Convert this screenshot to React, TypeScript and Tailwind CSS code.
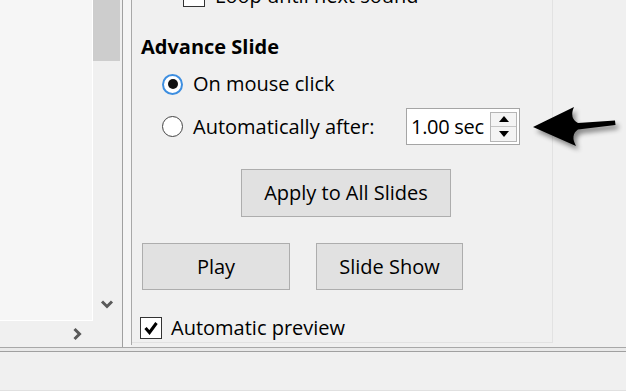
import React from "react";

function Chevron({ dir }: { dir: "down" | "right" }) {
    return (
        <svg width="14" height="14" viewBox="0 0 14 14" className="block">
            {dir === "down" ? (
                <polyline points="2,4.5 7,9.5 12,4.5" fill="none" stroke="#5a5a5a" strokeWidth="3" />
            ) : (
                <polyline points="4.5,2 9.5,7 4.5,12" fill="none" stroke="#5a5a5a" strokeWidth="3" />
            )}
        </svg>
    );
}

function Check({ checked }: { checked?: boolean }) {
    return (
        <div className="w-[22px] h-[22px] border-[1.5px] border-[#333] bg-white flex items-center justify-center shrink-0">
            {checked && (
                <svg width="16" height="16" viewBox="0 0 16 16">
                    <polyline points="2.5,8 6.5,12.5 13.5,3" fill="none" stroke="#000" strokeWidth="3" />
                </svg>
            )}
        </div>
    );
}

function Radio({ selected }: { selected?: boolean }) {
    return selected ? (
        <div className="w-[21px] h-[21px] rounded-full border-2 border-[#3d8ee0] bg-white flex items-center justify-center shrink-0">
            <div className="w-[10px] h-[10px] rounded-full bg-[#111]" />
        </div>
    ) : (
        <div className="w-[21px] h-[21px] rounded-full border-[1.5px] border-[#444] bg-white shrink-0" />
    );
}

// hand-drawn style pointer arrow with soft shadow
function Arrow() {
    return (
        <svg width="96" height="48" viewBox="0 0 96 48" className="block shrink-0 overflow-visible">
            <defs>
                <filter id="sh" x="-20%" y="-40%" width="150%" height="190%">
                    <feGaussianBlur in="SourceAlpha" stdDeviation="2.5" />
                    <feOffset dx="3" dy="4" result="b" />
                    <feComponentTransfer>
                        <feFuncA type="linear" slope="0.45" />
                    </feComponentTransfer>
                    <feMerge>
                        <feMergeNode />
                        <feMergeNode in="SourceGraphic" />
                    </feMerge>
                </filter>
            </defs>
            <path
                d="M5 23 L46 3 Q41 14 50 19 L87 16.5 L87.5 21 L50 25.5 Q42 31 48 42 Z"
                fill="#000"
                filter="url(#sh)"
            />
        </svg>
    );
}

function WinButton({ label, className }: { label: string; className: string }) {
    return (
        <div className={`bg-[#e1e1e1] border border-[#adadad] flex items-center justify-center text-black whitespace-nowrap shrink-0 ${className}`}>
            {label}
        </div>
    );
}

export default function App() {
    return (
        <div
            className="w-[626px] h-[391px] bg-[#f0f0f0] overflow-hidden flex flex-col text-[20px] text-black"
            style={{ fontFamily: '"Open Sans", "Noto Sans", sans-serif' }}
        >
            <div className="flex h-[347px] shrink-0">
                {/* left pane */}
                <div className="w-[122px] flex flex-col shrink-0">
                    <div className="flex h-[321px]">
                        <div className="w-[93px] bg-[#f6f6f6] border-r border-b border-white" />
                        <div className="w-[29px] flex flex-col bg-[#f0f0f0]">
                            <div className="w-[27px] h-[61px] bg-[#cdcdcd]" />
                            <div className="flex-1" />
                            <div className="w-[27px] flex justify-center pb-[10px]">
                                <Chevron dir="down" />
                            </div>
                        </div>
                    </div>
                    <div className="flex h-[26px]">
                        <div className="w-[93px] flex items-center justify-end pr-[9px]">
                            <Chevron dir="right" />
                        </div>
                    </div>
                </div>
                <div className="w-px bg-[#a0a0a0] shrink-0" />
                <div className="w-[8px] bg-[#f5f5f5] shrink-0" />
                <div className="w-px bg-[#a8a8a8] h-[345px] shrink-0" />

                {/* content */}
                <div className="w-[421px] h-[343px] shrink-0 border-r border-b border-[#e2e2e2] flex flex-col whitespace-nowrap">
                    <div className="flex items-center h-[22px] -mt-[15px] pl-[51px] gap-[10px] leading-none">
                        <Check />
                        <span>Loop until next sound</span>
                    </div>
                    <div className="mt-[26px] h-[28px] pl-[9px] font-bold leading-[28px]">Advance Slide</div>
                    <div className="mt-[8px] h-[30px] pl-[30px] flex items-center gap-[10px]">
                        <Radio selected />
                        <span>On mouse click</span>
                    </div>
                    <div className="mt-[9px] h-[37px] pl-[30px] flex items-center">
                        <Radio />
                        <span className="ml-[10px] w-[213px] shrink-0">Automatically after:</span>
                        <div className="w-[114px] h-[37px] shrink-0 bg-white border border-[#a5a5a5] flex items-center pl-[4px] pr-[2px]">
                            <span className="flex-1 tracking-[-0.3px]">1.00 sec</span>
                            <div className="w-[27px] h-[30px] border border-[#b5b5b5] flex flex-col bg-[#f4f4f4]">
                                <div className="flex-1 flex items-center justify-center border-b border-[#c5c5c5]">
                                    <div className="w-0 h-0 border-l-[5px] border-r-[5px] border-b-[6px] border-l-transparent border-r-transparent border-b-black" />
                                </div>
                                <div className="flex-1 flex items-center justify-center">
                                    <div className="w-0 h-0 border-l-[5px] border-r-[5px] border-t-[6px] border-l-transparent border-r-transparent border-t-black" />
                                </div>
                            </div>
                        </div>
                        <div className="ml-[8px] mt-[2px] shrink-0">
                            <Arrow />
                        </div>
                    </div>
                    <WinButton label="Apply to All Slides" className="mt-[24px] ml-[109px] w-[210px] h-[48px]" />
                    <div className="mt-[26px] flex">
                        <WinButton label="Play" className="ml-[10px] w-[148px] h-[47px]" />
                        <WinButton label="Slide Show" className="ml-[26px] w-[147px] h-[47px]" />
                    </div>
                    <div className="mt-[27px] ml-[8px] flex items-center h-[22px] gap-[9px]">
                        <Check checked />
                        <span>Automatic preview</span>
                    </div>
                </div>
            </div>

            {/* double separator */}
            <div className="h-px bg-[#a8a8a8]" />
            <div className="h-[3px] bg-[#e9e9e9]" />
            <div className="h-px bg-[#a0a0a0]" />
            <div className="flex-1 bg-[#f0f0f0] border-b border-[#e0e0e0]" />
        </div>
    );
}
